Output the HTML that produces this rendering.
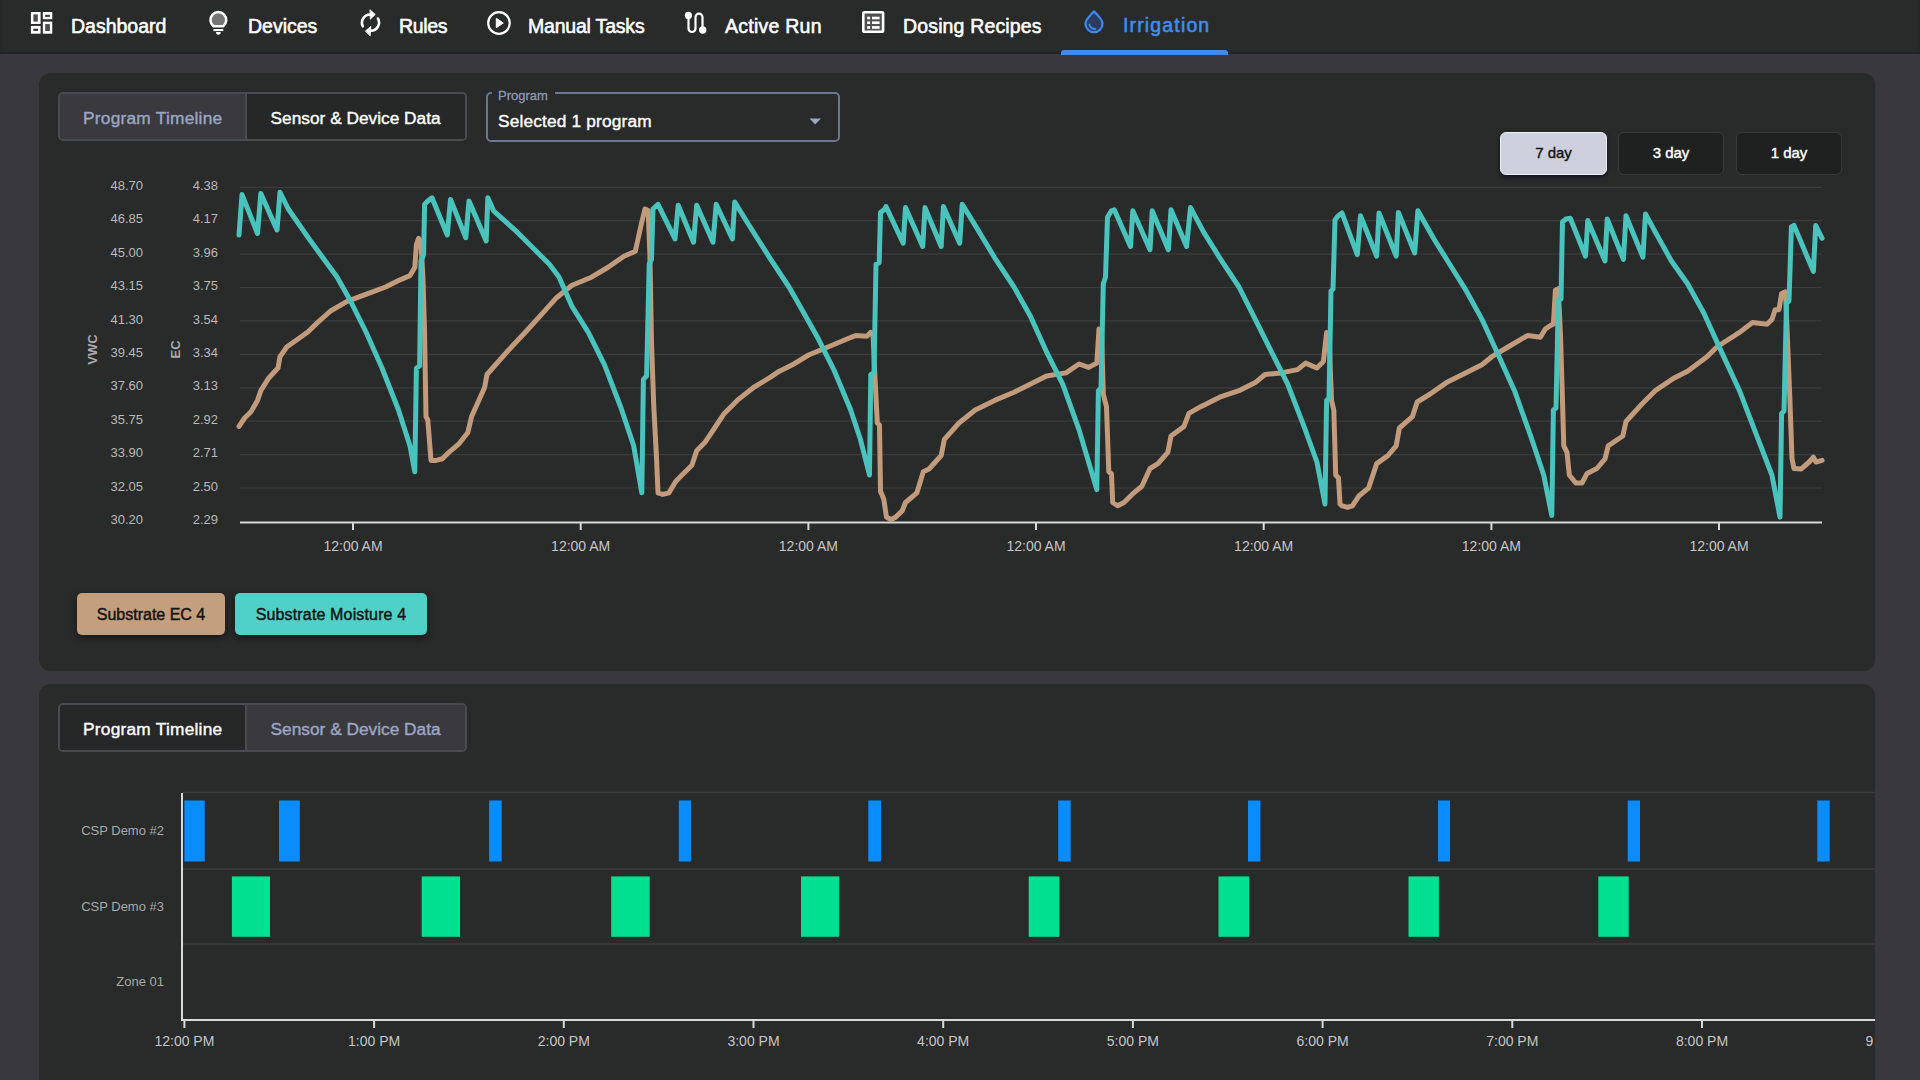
<!DOCTYPE html>
<html><head><meta charset="utf-8">
<style>
*{box-sizing:border-box;margin:0;padding:0}
html,body{width:1920px;height:1080px;overflow:hidden;background:#39383d;font-family:"Liberation Sans",sans-serif}
.a{position:absolute}
#hdr{left:0;top:0;width:1920px;height:54px;background:#292a2a;box-shadow:inset 0 -2px 2px rgba(0,0,0,.18)}
.nav{position:absolute;top:15px;font-size:19.5px;line-height:22px;color:#fff;white-space:nowrap;-webkit-text-stroke:0.55px #fff}
.ico{position:absolute}
.card{position:absolute;left:39px;width:1836px;background:#292a2a;border-radius:12px;overflow:hidden}
.tabs{position:absolute;left:19px;width:409px;height:49px;border:2px solid #4a4b50;border-radius:5px;overflow:hidden}
.tab{position:absolute;top:0;height:100%;font-size:17.3px;line-height:49px;white-space:nowrap;-webkit-text-stroke:0.4px currentColor}
.yl{position:absolute;font-size:13px;line-height:15px;color:#b9b9b9;text-align:right;width:60px}
.xl{position:absolute;font-size:14px;line-height:16px;color:#c6c6c6;text-align:center;width:100px}
.btn{position:absolute;border-radius:6px;font-size:15px;text-align:center;-webkit-text-stroke:0.4px currentColor}
.leg{position:absolute;top:520px;height:42px;border-radius:5px;font-size:16px;line-height:44px;color:#141414;text-align:center;box-shadow:0 3px 8px rgba(0,0,0,.45);-webkit-text-stroke:0.45px #141414}
.rl{position:absolute;font-size:13px;line-height:15px;color:#a9a9a9;text-align:right;width:140px}
</style></head><body>
<div id="hdr" class="a"></div>
<!-- nav icons -->
<svg class="ico" style="left:26px;top:8px" width="32" height="30" viewBox="0 0 32 30">
<g fill="#fff"><rect x="4.9" y="4" width="9.7" height="12"/><rect x="16.8" y="4" width="9.45" height="7.25"/><rect x="4.9" y="17.9" width="9.7" height="7.8"/><rect x="16.8" y="13.6" width="9.45" height="12.1"/></g>
<rect x="7.4" y="6.4" width="4.4" height="7.2" fill="#4c4c4c"/><rect x="19.2" y="6.8" width="4.7" height="2.1" fill="#3a3a3a"/><rect x="7.3" y="20.7" width="4.9" height="2.2" fill="#3a3a3a"/><rect x="19.2" y="16.1" width="4.7" height="6.9" fill="#4c4c4c"/>
</svg>
<div class="nav" style="left:71px">Dashboard</div>
<svg class="ico" style="left:208px;top:10px" width="21" height="26" viewBox="0 0 21 26">
<path d="M5.45 16.15 A7.9 7.9 0 1 1 15.25 16.15 Z" fill="#757575" stroke="#fff" stroke-width="2.5" stroke-linejoin="round"/>
<rect x="5.4" y="19" width="9.9" height="2.1" fill="#fff"/>
<path d="M8 22 H12.7 A2.35 2.8 0 0 1 8 22 Z" fill="#fff"/>
</svg>
<div class="nav" style="left:248px">Devices</div>
<svg class="ico" style="left:354px;top:5px" width="32" height="35" viewBox="0 0 32 35" fill="none" stroke="#fff" stroke-width="2.6" stroke-linecap="round">
<path d="M8.8 21.3 A8.2 8.2 0 0 1 16.6 9.5"/><path d="M16.2 4.9 L21.3 9.4 L16.5 14 Z" fill="#fff" stroke-width="0.8" stroke-linejoin="round"/>
<path d="M23.9 13.5 A8.2 8.2 0 0 1 16.6 25.8"/><path d="M11.6 25.9 L16.9 21.3 L16.2 30.6 Z" fill="#fff" stroke-width="0.8" stroke-linejoin="round"/>
</svg>
<div class="nav" style="left:399px;letter-spacing:-0.35px">Rules</div>
<svg class="ico" style="left:486px;top:10px" width="26" height="26" viewBox="0 0 26 26" fill="none" stroke="#fff" stroke-width="2.2">
<circle cx="13" cy="13" r="10.8"/><path d="M10.3 8.3 L17.3 13 L10.3 17.7 Z" fill="#fff" stroke-width="1" stroke-linejoin="round"/>
</svg>
<div class="nav" style="left:528px;letter-spacing:-0.2px">Manual Tasks</div>
<svg class="ico" style="left:684px;top:11px" width="24" height="24" viewBox="0 0 24 24" fill="none" stroke="#fff" stroke-width="2.2" stroke-linecap="round">
<circle cx="4.4" cy="4.4" r="3.6" fill="#fff" stroke="none"/><circle cx="18.7" cy="19" r="3.7" fill="#fff" stroke="none"/>
<path d="M4.5 4.5 V17.5 A3.5 3.5 0 0 0 11.5 17.5 V6.2 A3.5 3.5 0 0 1 18.5 6.2 V19"/>
</svg>
<div class="nav" style="left:725px;letter-spacing:0.25px">Active Run</div>
<svg class="ico" style="left:862px;top:11px" width="23" height="23" viewBox="0 0 23 23">
<rect x="1.3" y="1.3" width="19.8" height="19.4" rx="0.8" fill="#505050" stroke="#fff" stroke-width="2.6"/>
<g fill="#fff"><rect x="5.2" y="5.7" width="2.9" height="2.6"/><rect x="5.2" y="10.4" width="2.9" height="2.6"/><rect x="5.2" y="15.1" width="2.9" height="2.7"/>
<rect x="10" y="5.7" width="7.6" height="2.6"/><rect x="10" y="10.4" width="7.6" height="2.6"/><rect x="10" y="15.1" width="7.6" height="2.7"/></g>
</svg>
<div class="nav" style="left:903px;letter-spacing:0.15px">Dosing Recipes</div>
<svg class="ico" style="left:1083px;top:9px" width="22" height="26" viewBox="0 0 22 26" fill="none" stroke="#3d88f5" stroke-width="2.2" stroke-linejoin="round">
<path d="M11 2.3 C8.5 5.5 2.5 10 2.5 14.7 A8.5 8.5 0 0 0 19.5 14.7 C19.5 10 13.5 5.5 11 2.3 Z" fill="#2b3c5e"/>
<path d="M6.4 15.5 A6 6 0 0 0 12.3 20" stroke-width="1.9" stroke-linecap="round"/>
</svg>
<div class="nav" style="left:1123px;top:14px;color:#3f8ef2;-webkit-text-stroke:0.55px #3f8ef2;letter-spacing:1.15px">Irrigation</div>
<div class="a" style="left:1061px;top:50px;width:167px;height:4.5px;background:#3d8bf0;border-radius:3px 3px 0 0"></div>

<!-- card 1 -->
<div class="card" style="top:73px;height:598px">
  <div class="tabs" style="top:19px">
    <div class="tab" style="left:0;width:185px;background:#3a393e;color:#9aa6c4;padding-left:23px;letter-spacing:0.25px">Program Timeline</div>
    <div class="tab" style="left:185px;width:220px;background:#262727;color:#fff;border-left:2px solid #4a4b50;padding-left:23.6px">Sensor &amp; Device Data</div>
  </div>
  <div class="a" style="left:446.5px;top:19px;width:354px;height:50px;border:2px solid #6b7692;border-radius:5px"></div>
  <div class="a" style="left:453px;top:14px;width:63px;height:10px;background:#292a2a"></div>
  <div class="a" style="left:459px;top:16px;font-size:13px;line-height:14px;color:#8e98b2;-webkit-text-stroke:0.3px #8e98b2">Program</div>
  <div class="a" style="left:459px;top:38px;font-size:17.3px;line-height:20px;color:#fff;-webkit-text-stroke:0.4px #fff;letter-spacing:0.17px">Selected 1 program</div>
  <svg class="a" style="left:770px;top:45px" width="13" height="7" viewBox="0 0 13 7"><path d="M0.5 0.5 H12 L6.25 6.5Z" fill="#9aa6c4"/></svg>

  <div class="btn" style="left:1461px;top:59px;width:107px;height:43px;background:#ced1dd;border:1.5px solid #eceef3;color:#141414;line-height:40px;box-shadow:0 2px 4px rgba(8,12,30,.75)">7 day</div>
  <div class="btn" style="left:1579px;top:59px;width:106px;height:43px;background:#1f2020;border:1.5px solid #3b3b3d;color:#fff;line-height:40px">3 day</div>
  <div class="btn" style="left:1697px;top:59px;width:106px;height:43px;background:#1f2020;border:1.5px solid #3b3b3d;color:#fff;line-height:40px">1 day</div>
</div>

<!-- chart svg in page coords -->
<svg class="a" style="left:0;top:0" width="1920" height="1080" viewBox="0 0 1920 1080">
  <g stroke="#3c3c3c" stroke-width="1.2">
    <path d="M240 187.3H1822M240 220.7H1822M240 254.1H1822M240 287.5H1822M240 320.9H1822M240 354.4H1822M240 387.8H1822M240 421.2H1822M240 454.6H1822M240 488.0H1822"/>
  </g>
  <path d="M240 522.4H1822" stroke="#d8d8d8" stroke-width="2"/>
  <path d="M353 522V530M580.7 522V530M808.4 522V530M1036 522V530M1263.7 522V530M1491.4 522V530M1719 522V530" stroke="#d8d8d8" stroke-width="2"/>
  <polyline fill="none" stroke="#c19b7b" stroke-width="5" stroke-linejoin="round" stroke-linecap="round" points="239,426.4 244.6,418 251,411.8 257.5,400.4 260.8,390.7 269,377.7 278,368 280,356.7 286.7,347 298,339 307.8,332 317.5,322.6 330.5,311 346.7,301.6 359.7,296.7 372.6,291.8 385.6,287 398.5,280.5 410,275.6 414.8,267.5 416.4,244.8 418.6,238.3 421,243 422.9,277 424.5,329 426,416.6 427.8,420 431,460.4 436,460.4 442.4,458.8 448.9,452.3 458.6,444.2 467.7,432.8 471.6,416.6 484.6,387.5 487,374.5 492.7,368 507,351.8 526.7,330.7 542.9,312.9 555.9,298.3 572,285.3 591.5,277.2 607.7,267.5 624,256.2 635.3,251.3 641.8,222 645,209 648.2,210.8 649.9,254.6 651.5,342 653.8,407 656.4,455.5 658,492.8 662.7,494.4 669,492.8 675.7,481.5 682,475 691.9,465.3 696.7,450.7 704.8,442.6 714.6,428 724.3,413.4 737.2,400.4 753.5,387.5 769.7,377.7 779.4,371.2 792.4,364.8 808.6,355 828,347 847.5,338.8 855.6,335.6 866.9,336.2 870.8,332.4 873,335 875,377.7 877.3,423 879.5,425 880.5,491.2 883.8,499.3 886.4,517 891,519.7 895.8,517 902.3,510.6 905.5,502.5 916.9,492.8 923.3,471.7 929,469 941.2,455.5 944.4,439.3 959,423 975.2,410 994.7,400.4 1014,392.3 1033.6,382.6 1046.5,376 1066,372.9 1079,364 1088.7,367.4 1096.8,363.1 1099,329 1101.5,331 1103.3,394 1106.5,406.9 1108.8,471.7 1111.5,474 1112.7,502.5 1117.6,505.8 1124,502.5 1132.1,494.4 1141.9,486.3 1150,468.5 1158,463.6 1167.8,452.3 1171,436 1184,426.4 1188.9,413.4 1200.2,406.9 1219.7,397.2 1239,390.7 1255.3,382.6 1265,374.5 1281.2,372.9 1297.5,369.6 1305.6,363.1 1316.9,368 1323.4,361.5 1326.6,332.4 1329,334 1331.5,400.4 1333.8,410 1335.7,475 1338.5,478 1340,504 1342,505.8 1347.6,507.4 1352.4,505.8 1358.9,496 1368.6,488 1376.7,463.6 1388,455.5 1396.2,445.8 1399.4,428 1412.4,416.6 1417.2,402 1430.2,394 1446.4,382.6 1462.6,374.5 1482,364.8 1491.8,356.7 1508,347 1527.5,335.6 1540.4,337.2 1545.3,329 1549.9,325.9 1553.4,324 1555.4,290.2 1558.3,288.6 1560.5,335 1561.9,381 1563.8,445.8 1567,452.3 1569.3,475 1575.8,483 1582,483 1587.1,473.4 1596.9,468.5 1605,458.8 1608.2,445.8 1622.8,436 1626,421.5 1642.2,403.7 1655.2,390.7 1674.7,377.7 1687.6,371.2 1707,356.7 1716.8,347 1739.5,332.4 1752.5,322.6 1767,324.2 1772,319.4 1775.1,309.7 1779,309.7 1781.6,293.5 1785.5,291.8 1787.5,340 1789.7,394 1792,458.8 1794,468.5 1801,469.1 1809.2,462 1813.4,457.1 1816,462 1822.1,460.4"/>
  <polyline fill="none" stroke="#49c3bc" stroke-width="5" stroke-linejoin="round" stroke-linecap="round" points="239,235 242,194.6 257.5,233.5 260.8,193.6 277,230 280,192.3 288.3,209 311,241.6 337,277 350,300 366,332 382,368 398.5,410 410,446 414.8,471.7 416.4,368 419.6,366 421,261 423.6,254.6 424.6,204.3 427.8,201 432,197.8 447.3,235 450.5,199.4 465.8,237.7 469,201 486.2,241 487.8,197.8 493.6,210.8 517,231.9 549.4,264.3 559,277 572,306.4 588.3,332.4 604.5,364.8 620.7,407 633.7,445.8 641.8,492.8 643.4,379.4 646.6,376 649.2,264.3 651.5,259.4 653,209 658,204.3 675,239 678.2,205.3 693.5,242.2 696.7,205.3 713,242.2 716.2,204.3 732.4,239 734.7,202 747,222 769.7,257.8 789,287 802,309.7 818.3,338.8 834.5,371.2 850.7,410 860.4,439.3 869.5,475 870.8,374.5 874,373 876,264.3 879.2,262.7 880.5,212.4 884.7,209.2 886,206.6 903.2,243.2 905.5,207.6 922.7,246.5 925,207.6 941.2,246.5 943.4,206.6 959.7,243.2 962.2,204.3 975.2,225.4 994.7,257.8 1014,287 1030.3,316 1046.5,351.8 1062.7,384.2 1079,429.6 1096.8,489.6 1098.4,390.7 1101,388 1103.3,283.7 1105.5,277.2 1107.5,217.3 1111.4,210.8 1114.3,209.8 1130.5,246.5 1132.8,210.8 1150,249.7 1152.2,210.8 1168.4,249.7 1171,209.8 1186.6,246.5 1190.5,207.6 1203.5,231.9 1219.7,257.8 1239,287 1255.3,319.4 1271.5,351.8 1287.7,384.2 1304,426.4 1316.9,462 1325,504.1 1326.6,400.4 1329,398 1331,291 1333,289 1335,220 1338,216 1342,213 1357.3,254.6 1360.5,215.7 1376.7,256.2 1379,213 1396.2,256.2 1398.4,212.4 1414.7,253 1417.9,210.8 1433.5,238.3 1449.7,264.3 1465.9,290.2 1482,319.4 1498.3,355 1514.5,390.7 1530.7,436 1543.7,475 1551.8,515.5 1553.4,410 1556,408 1558.3,300 1561,299 1562.5,222 1566,219 1570.3,218.3 1585.5,256.2 1587.8,220.5 1605,261 1607.2,219 1623.4,259.4 1626,215.7 1642.9,257.1 1645.5,214 1655.2,231.9 1671.4,261 1687.6,283.7 1703.8,313 1720,348.6 1739.5,390.7 1755.7,432.8 1771.9,475 1780,517.1 1781.6,413.4 1784,411 1786.5,303.2 1789,301 1791.4,227 1794,225.4 1813.4,271.4 1815.7,225.4 1822.1,238.3"/>
</svg>

<!-- y labels -->
<div class="yl" style="left:83px;top:178.0px">48.70</div><div class="yl" style="left:158px;top:178.0px">4.38</div>
<div class="yl" style="left:83px;top:211.4px">46.85</div><div class="yl" style="left:158px;top:211.4px">4.17</div>
<div class="yl" style="left:83px;top:244.8px">45.00</div><div class="yl" style="left:158px;top:244.8px">3.96</div>
<div class="yl" style="left:83px;top:278.2px">43.15</div><div class="yl" style="left:158px;top:278.2px">3.75</div>
<div class="yl" style="left:83px;top:311.6px">41.30</div><div class="yl" style="left:158px;top:311.6px">3.54</div>
<div class="yl" style="left:83px;top:345.0px">39.45</div><div class="yl" style="left:158px;top:345.0px">3.34</div>
<div class="yl" style="left:83px;top:378.4px">37.60</div><div class="yl" style="left:158px;top:378.4px">3.13</div>
<div class="yl" style="left:83px;top:411.8px">35.75</div><div class="yl" style="left:158px;top:411.8px">2.92</div>
<div class="yl" style="left:83px;top:445.2px">33.90</div><div class="yl" style="left:158px;top:445.2px">2.71</div>
<div class="yl" style="left:83px;top:478.6px">32.05</div><div class="yl" style="left:158px;top:478.6px">2.50</div>
<div class="yl" style="left:83px;top:512.0px">30.20</div><div class="yl" style="left:158px;top:512.0px">2.29</div>
<div class="a" style="left:72px;top:342px;width:40px;text-align:center;font-size:13px;font-weight:bold;line-height:15px;color:#aaa;transform:rotate(-90deg)">VWC</div>
<div class="a" style="left:155px;top:342px;width:40px;text-align:center;font-size:13px;font-weight:bold;line-height:15px;color:#aaa;transform:rotate(-90deg)">EC</div>
<!-- x labels -->
<div class="xl" style="left:303px;top:538px">12:00 AM</div>
<div class="xl" style="left:530.7px;top:538px">12:00 AM</div>
<div class="xl" style="left:758.4px;top:538px">12:00 AM</div>
<div class="xl" style="left:986px;top:538px">12:00 AM</div>
<div class="xl" style="left:1213.7px;top:538px">12:00 AM</div>
<div class="xl" style="left:1441.4px;top:538px">12:00 AM</div>
<div class="xl" style="left:1669px;top:538px">12:00 AM</div>

<div class="leg" style="left:77px;top:593px;width:148px;background:#c49f7e">Substrate EC 4</div>
<div class="leg" style="left:235px;top:593px;width:192px;background:#4fd1c8;letter-spacing:0.15px">Substrate Moisture 4</div>

<!-- card 2 -->
<div class="card" style="top:684px;height:450px">
  <div class="tabs" style="top:19px">
    <div class="tab" style="left:0;width:185px;background:#262727;color:#fff;padding-left:23px;letter-spacing:0.25px">Program Timeline</div>
    <div class="tab" style="left:185px;width:220px;background:#3a393e;color:#9aa6c4;border-left:2px solid #4a4b50;padding-left:23.6px">Sensor &amp; Device Data</div>
  </div>
  <svg class="a" style="left:-39px;top:-684px" width="1920" height="1080" viewBox="0 0 1920 1080">
    <path d="M182 792.5H1920M182 869H1920M182 944H1920" stroke="#3e3e3e" stroke-width="1.5"/>
    <path d="M182 793V1021M181 1020H1920" stroke="#d8d8d8" stroke-width="2"/>
    <path d="M184.4 1020V1028M374.1 1020V1028M563.8 1020V1028M753.5 1020V1028M943.2 1020V1028M1132.9 1020V1028M1322.6 1020V1028M1512.3 1020V1028M1702 1020V1028M1891.7 1020V1028" stroke="#d8d8d8" stroke-width="2"/>
    <g fill="#0a8cff">
      <rect x="184.4" y="800.5" width="20.3" height="61"/><rect x="279" y="800.5" width="20.8" height="61"/>
      <rect x="489.1" y="800.5" width="12.6" height="61"/><rect x="678.8" y="800.5" width="12.2" height="61"/>
      <rect x="868.3" y="800.5" width="12.7" height="61"/><rect x="1058.2" y="800.5" width="12.5" height="61"/>
      <rect x="1248" y="800.5" width="12.4" height="61"/><rect x="1438" y="800.5" width="12" height="61"/>
      <rect x="1627.7" y="800.5" width="12.3" height="61"/><rect x="1817.3" y="800.5" width="12.4" height="61"/>
    </g>
    <g fill="#00e090">
      <rect x="231.9" y="876.4" width="38.1" height="60.4"/><rect x="421.7" y="876.4" width="38.3" height="60.4"/>
      <rect x="611.2" y="876.4" width="38.5" height="60.4"/><rect x="801" y="876.4" width="38.2" height="60.4"/>
      <rect x="1028.7" y="876.4" width="30.7" height="60.4"/><rect x="1218.5" y="876.4" width="30.7" height="60.4"/>
      <rect x="1408.5" y="876.4" width="30.4" height="60.4"/><rect x="1598.3" y="876.4" width="30.4" height="60.4"/>
    </g>
  </svg>
  <div class="rl" style="left:-15px;top:139px">CSP Demo #2</div>
  <div class="rl" style="left:-15px;top:214.5px">CSP Demo #3</div>
  <div class="rl" style="left:-15px;top:290px">Zone 01</div>
  <div class="a" style="left:0;top:0;width:1834px;height:450px;overflow:hidden"><div class="xl" style="left:95.4px;top:349px">12:00 PM</div>
  <div class="xl" style="left:285.1px;top:349px">1:00 PM</div>
  <div class="xl" style="left:474.8px;top:349px">2:00 PM</div>
  <div class="xl" style="left:664.5px;top:349px">3:00 PM</div>
  <div class="xl" style="left:854.2px;top:349px">4:00 PM</div>
  <div class="xl" style="left:1043.9px;top:349px">5:00 PM</div>
  <div class="xl" style="left:1233.6px;top:349px">6:00 PM</div>
  <div class="xl" style="left:1423.3px;top:349px">7:00 PM</div>
  <div class="xl" style="left:1613px;top:349px">8:00 PM</div>
  <div class="xl" style="left:1802.7px;top:349px">9:00 PM</div></div>
</div>
</body></html>
